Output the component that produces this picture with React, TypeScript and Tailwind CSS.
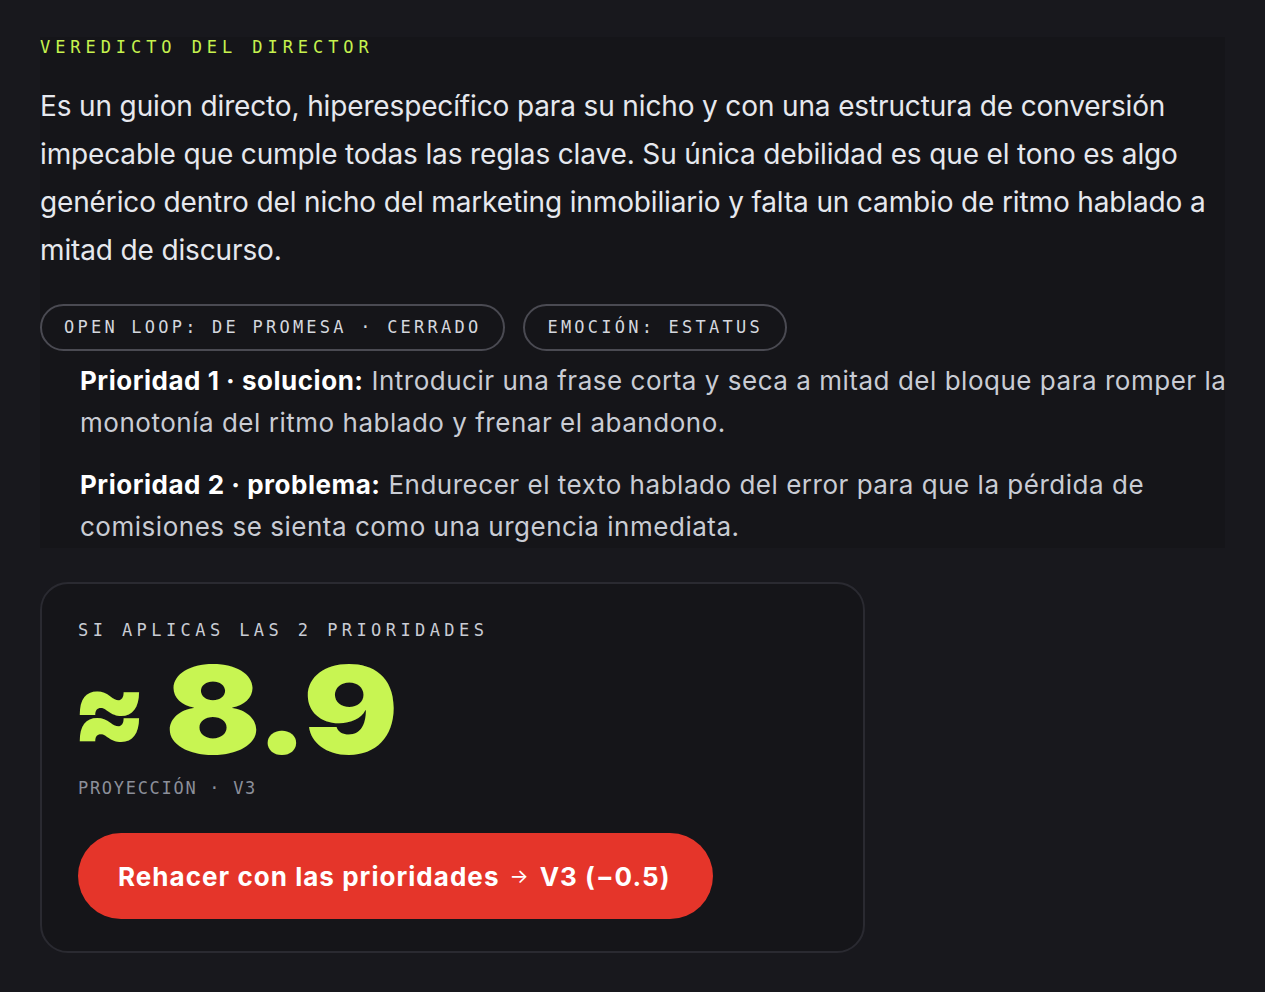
import React from "react";

const mono = { fontFamily: '"DejaVu Sans Mono", "Liberation Mono", monospace' };

const chips = ["OPEN LOOP: DE PROMESA · CERRADO", "EMOCIÓN: ESTATUS"];

const priorities = [
  {
    label: "Prioridad 1 · solucion:",
    lines: ["Introducir una frase corta y seca a mitad del bloque para romper la", "monotonía del ritmo hablado y frenar el abandono."],
  },
  {
    label: "Prioridad 2 · problema:",
    lines: ["Endurecer el texto hablado del error para que la pérdida de", "comisiones se sienta como una urgencia inmediata."],
  },
];

export default function App() {
  return (
    <div className="min-h-[992px] w-full bg-[#18181d] px-10 pt-[37px] pb-10 font-['Inter',sans-serif]">
      <div className="bg-[#151519]">
        <h2
          className="text-[17px] leading-[20px] tracking-[0.29em] text-[#c6f24e]"
          style={mono}
        >
          VEREDICTO DEL DIRECTOR
        </h2>

        <p className="mt-[25px] whitespace-nowrap text-[28px] leading-[48px] tracking-[-0.005em] text-[#e6e8ee]">
          Es un guion directo, hiperespecífico para su nicho y con una estructura de conversión
          <br />
          impecable que cumple todas las reglas clave. Su única debilidad es que el tono es algo
          <br />
          genérico dentro del nicho del marketing inmobiliario y falta un cambio de ritmo hablado a
          <br />
          mitad de discurso.
        </p>

        <div className="mt-[30px] flex gap-[18px]">
          {chips.map((chip) => (
            <span
              key={chip}
              className="flex h-[47px] items-center rounded-full border-2 border-[#4a4a52] px-[22px] text-[17px] tracking-[0.19em] text-[#d4d7de]"
              style={mono}
            >
              {chip}
            </span>
          ))}
        </div>

        <div className="mt-[9px] flex flex-col gap-[20px] pl-10">
          {priorities.map((p) => (
            <p
              key={p.label}
              className="whitespace-nowrap text-[26px] leading-[42px] tracking-[0.02em] text-[#c9ccd4]"
            >
              <span className="font-bold text-white">{p.label}</span> {p.lines[0]}
              <br />
              {p.lines[1]}
            </p>
          ))}
        </div>
      </div>

      <div className="mt-[34px] w-[825px] rounded-[28px] border-2 border-[#2a2a31] bg-[#151519] px-[36px] pt-[34px] pb-[32px]">
        <div className="text-[17px] leading-[24px] tracking-[0.26em] text-[#c9ccd4]" style={mono}>
          SI APLICAS LAS 2 PRIORIDADES
        </div>

        <div className="mt-[12px] flex items-center gap-[18px] text-[#c8f552]">
          <span className="-ml-[6px] text-[108px] font-black leading-none">≈</span>
          <span className="origin-left scale-x-[1.16] text-[122px] font-black leading-[112px] tracking-[-0.02em]">
            8.9
          </span>
        </div>

        <div className="mt-[10px] text-[17px] leading-[24px] tracking-[0.1em] text-[#8b8f9a]" style={mono}>
          PROYECCIÓN · V3
        </div>

        <button className="mt-[33px] flex h-[86px] items-center rounded-full bg-[#e5352a] pl-[40px] pr-[42px] text-[26px] font-bold tracking-[0.04em] text-white">
          Rehacer con las prioridades <span className="mx-[10px] text-[20px] font-normal">→</span> V3 (−0.5)
        </button>
      </div>
    </div>
  );
}
